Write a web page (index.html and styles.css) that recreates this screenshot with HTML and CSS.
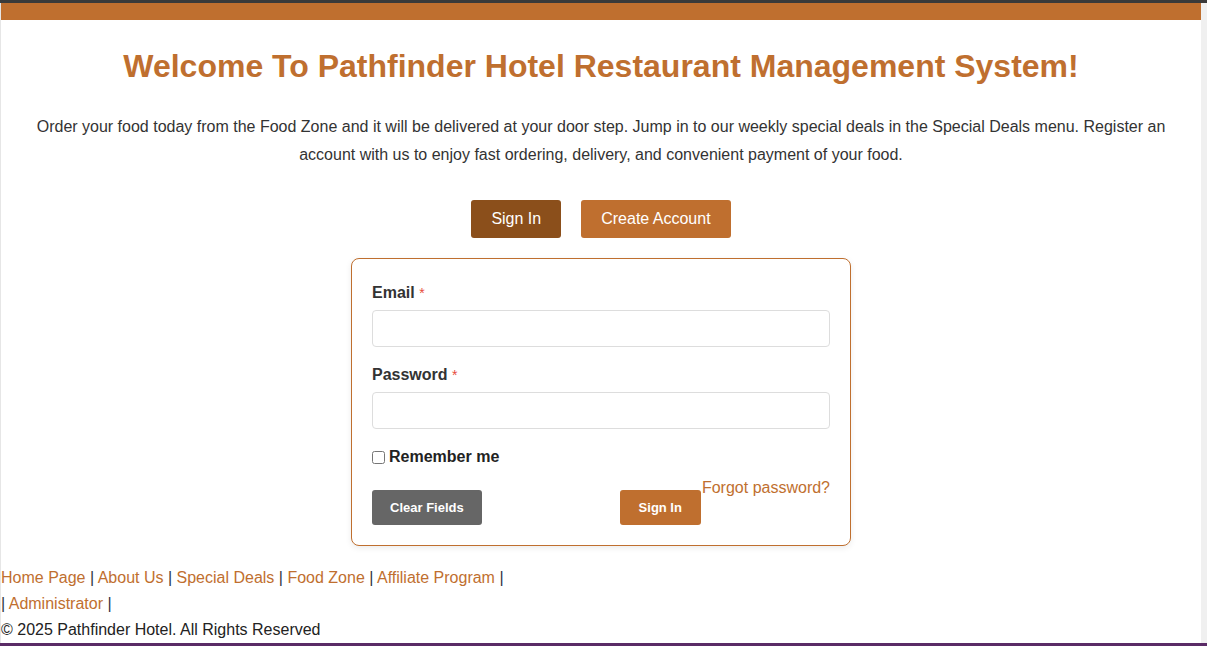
FILE: index.html
```html
<!DOCTYPE html>
<html lang="en">
<head>
<meta charset="utf-8">
<title>Pathfinder Hotel Restaurant Management System</title>
<link rel="stylesheet" href="styles.css">
</head>
<body>
<div class="topbar"></div>
<div class="shell">
  <div class="page">
    <header class="brandbar"></header>
    <main class="main">
      <h1 class="title">Welcome To Pathfinder Hotel Restaurant Management System!</h1>
      <p class="intro">Order your food today from the Food Zone and it will be delivered at your door step. Jump in to our weekly special deals in the Special Deals menu. Register an account with us to enjoy fast ordering, delivery, and convenient payment of your food.</p>
      <div class="tabs">
        <button class="tab tab-active">Sign In</button>
        <button class="tab">Create Account</button>
      </div>
      <form class="card">
        <div class="group">
          <label class="label">Email <span class="req">*</span></label>
          <input class="input" type="email">
        </div>
        <div class="group">
          <label class="label">Password <span class="req">*</span></label>
          <input class="input" type="password">
        </div>
        <div class="remember">
          <input class="check" type="checkbox" id="rem"><label for="rem">Remember me</label>
        </div>
        <div class="actions">
          <button type="button" class="btn btn-grey">Clear Fields</button>
          <div class="right">
            <button type="button" class="btn btn-orange">Sign In</button>
            <a class="forgot" href="#">Forgot password?</a>
          </div>
        </div>
      </form>
    </main>
    <footer class="footer">
      <div class="nav"><a href="#">Home Page</a> | <a href="#">About Us</a> | <a href="#">Special Deals</a> | <a href="#">Food Zone</a> | <a href="#">Affiliate Program</a> |</div>
      <div class="nav">| <a href="#">Administrator</a> |</div>
      <div class="copy">© 2025 Pathfinder Hotel. All Rights Reserved</div>
    </footer>
  </div>
  <div class="gutter"></div>
</div>
<div class="bottombar"></div>
</body>
</html>
```
FILE: styles.css
```css
* { box-sizing: border-box; }
html, body { margin: 0; padding: 0; }
body {
  font-family: "Liberation Sans", Arial, sans-serif;
  font-size: 16px;
  color: #333;
  background: #fff;
}
.topbar { height: 3px; background: #3a3a3a; }
.shell { display: flex; }
.page {
  width: 1201px;
  border-left: 1px solid #e6e6e6;
  background: #fff;
}
.gutter { flex: 1; background: #f0f0f0; }
.brandbar { height: 17px; background: #bf6f2f; }
.main { padding: 0 30px; text-align: center; }
.title {
  margin: 28px 0 0;
  font-size: 32px;
  line-height: 37px;
  font-weight: bold;
  color: #bf6f2f;
}
.intro {
  margin: 28px 0 0;
  line-height: 28px;
  color: #333;
}
.tabs {
  margin-top: 31px;
  display: flex;
  justify-content: center;
  gap: 20px;
}
.tab {
  font-family: inherit;
  font-size: 16px;
  line-height: 18px;
  padding: 10px 20px;
  border: none;
  border-radius: 3px;
  background: #bf6f2f;
  color: #fff;
}
.tab-active { background: #8b4f1b; }
.card {
  width: 500px;
  margin: 20px auto 0;
  padding: 23px 20px 20px;
  border: 1px solid #bf6f2f;
  border-radius: 8px;
  box-shadow: 0 2px 6px rgba(0,0,0,0.08);
  text-align: left;
  background: #fff;
}
.group { margin-bottom: 17px; }
.label {
  display: block;
  font-weight: bold;
  line-height: 22px;
  margin-bottom: 6px;
  color: #333;
}
.req { color: #e74c3c; font-weight: normal; font-size: 14px; }
.input {
  display: block;
  width: 100%;
  height: 37px;
  border: 1px solid #ddd;
  border-radius: 4px;
  font-family: inherit;
  font-size: 16px;
  padding: 8px 10px;
}
.remember {
  display: flex;
  align-items: center;
  font-weight: bold;
  line-height: 22px;
  margin-top: 15px;
  color: #222;
}
.check { margin: 0 4px 0 0; width: 13px; height: 13px; }
.actions {
  display: flex;
  justify-content: space-between;
  align-items: flex-start;
  margin-top: 22px;
}
.right { display: flex; align-items: flex-start; }
.btn {
  font-family: inherit;
  font-size: 13px;
  font-weight: bold;
  line-height: 15px;
  padding: 10px 19px;
  border: none;
  border-radius: 3px;
  color: #fff;
}
.btn-grey { background: #666; padding: 10px 18px; }
.btn-orange { background: #bf6f2f; }
.forgot {
  margin-top: -11px;
  margin-left: 1px;
  color: #bf6f2f;
  text-decoration: none;
  line-height: 18px;
}
.footer { margin-top: 19px; line-height: 26px; color: #2f3440; }
.nav a { color: #bf6f2f; text-decoration: none; }
.copy { color: #222; }
.bottombar { height: 4px; background: #5a2b66; }
```
